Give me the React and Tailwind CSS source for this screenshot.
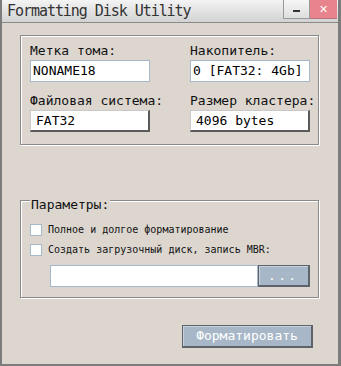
import React from "react";

const mono = { fontFamily: '"DejaVu Sans Mono", "Liberation Mono", monospace' };

function Label({ children }) {
  return (
    <div className="text-[13px] leading-[15px] text-[#111] mb-[2px] whitespace-nowrap" style={mono}>
      {children}
    </div>
  );
}

function FlatInput({ value }) {
  return (
    <div
      className="w-[120px] h-[22px] bg-white border border-[#a6b8cc] flex items-center pl-[2px] text-[13px] text-black whitespace-nowrap"
      style={mono}
    >
      {value}
    </div>
  );
}

function RaisedInput({ value }) {
  return (
    <div
      className="w-[120px] h-[22px] bg-white border border-[#9a9a9a] border-r-2 border-b-2 border-r-[#5a5a5a] border-b-[#5a5a5a] border-t-[#c8c8c8] border-l-[#c8c8c8] flex items-center pl-[5px] text-[13px] text-black whitespace-nowrap"
      style={mono}
    >
      {value}
    </div>
  );
}

function Check({ label }) {
  return (
    <div className="flex items-center h-[12px]">
      <div className="w-[12px] h-[12px] bg-white border border-[#a6b8cc]" />
      <span className="ml-[6px] text-[10px] leading-[12px] text-[#111] whitespace-nowrap" style={mono}>
        {label}
      </span>
    </div>
  );
}

export default function App() {
  return (
    <div className="w-[341px] h-[366px] bg-[#dcd6cf] border-l-2 border-r-[3px] border-b-2 border-[#7c7c7c] flex flex-col overflow-hidden">
      {/* Title bar */}
      <div className="h-[23px] shrink-0 flex items-start bg-gradient-to-b from-[#f4f4f4] to-[#d2d2d2] border-b border-[#8a8a8a]">
        <div
          className="pl-[5px] pt-[3px] text-[15px] leading-[17px] tracking-[-1.05px] text-[#333]"
          style={mono}
        >
          Formatting Disk Utility
        </div>
        <div className="ml-auto flex mr-[1px]">
          <div className="w-[27px] h-[19px] bg-gradient-to-b from-[#f6f6f6] to-[#dedede] border border-t-0 border-[#9a9a9a] flex items-center justify-center">
            <div className="w-[7px] h-[2px] bg-[#333] mt-[3px]" />
          </div>
          <div className="w-[27px] h-[19px] bg-[#e8848d] border-b border-[#b8747a] flex items-center justify-center text-white text-[11px] leading-none font-bold" style={{ fontFamily: '"DejaVu Sans", sans-serif' }}>
            ✕
          </div>
        </div>
      </div>

      {/* Group 1 */}
      <div className="mt-[12px] ml-[18px] w-[299px] border border-[#8a8a8a] shadow-[1px_1px_0_#ffffff,inset_1px_1px_0_#ffffff] pt-[7px] pb-[12px] pl-[9px] grid grid-cols-[120px_120px] gap-x-[40px] gap-y-[11px]">
        <div>
          <Label>Метка тома:</Label>
          <FlatInput value="NONAME18" />
        </div>
        <div>
          <Label>Накопитель:</Label>
          <FlatInput value="0 [FAT32: 4Gb]" />
        </div>
        <div>
          <Label>Файловая система:</Label>
          <RaisedInput value="FAT32" />
        </div>
        <div>
          <Label>Размер кластера:</Label>
          <RaisedInput value="4096 bytes" />
        </div>
      </div>

      {/* Group 2 */}
      <div className="relative mt-[55px] ml-[18px] w-[299px] border border-[#8a8a8a] shadow-[1px_1px_0_#ffffff,inset_1px_1px_0_#ffffff] pt-[23px] pb-[10px] pl-[9px] flex flex-col">
        <span
          className="absolute top-[-4px] left-[9px] px-[1px] bg-[#dcd6cf] text-[13px] leading-[15px] text-[#111]"
          style={mono}
        >
          Параметры:
        </span>
        <Check label="Полное и долгое форматирование" />
        <div className="mt-[8px]">
          <Check label="Создать загрузочный диск, запись MBR:" />
        </div>
        <div className="flex mt-[9px] ml-[20px]">
          <div className="w-[208px] h-[22px] bg-white border border-[#a6b8cc]" />
          <div className="w-[52px] h-[22px] bg-[#a7b7c7] border border-[#5c636b] border-r-2 border-b-2 shadow-[inset_1px_1px_0_#c8d2dc] flex items-center justify-center text-white text-[12px] tracking-[3px]" style={mono}>
            ...
          </div>
        </div>
      </div>

      {/* Format button */}
      <div className="flex justify-end mt-[27px] mr-[25px]">
        <div
          className="w-[131px] h-[23px] bg-[#a7b7c7] border border-[#5c636b] border-r-2 border-b-2 shadow-[inset_1px_1px_0_#c8d2dc] flex items-center justify-center text-white text-[13px]"
          style={mono}
        >
          Форматировать
        </div>
      </div>
    </div>
  );
}
